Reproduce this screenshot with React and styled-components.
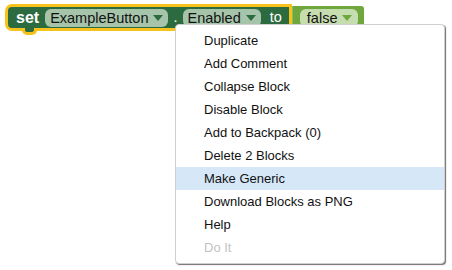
import styled, { createGlobalStyle } from "styled-components";

const GlobalStyle = createGlobalStyle`
  body {
    margin: 0;
    background: #fff;
    font-family: "Liberation Sans", Arial, sans-serif;
  }
`;

const Workspace = styled.div`
  position: relative;
  width: 452px;
  height: 270px;
  overflow: hidden;
  background: #fff;
`;

const BlockRow = styled.div`
  display: flex;
  align-items: center;
  padding: 4px 0 0 5px;
`;

const SetBlock = styled.div`
  position: relative;
  display: flex;
  align-items: center;
  height: 21px;
  padding: 0 7px 0 8px;
  background: #2c6a40;
  border: 3px solid #f8c21d;
  border-radius: 7px 0 0 7px;
  color: #fff;
  font-size: 14.5px;

  /* puzzle tab under the block */
  &::after {
    content: "";
    position: absolute;
    left: 14px;
    bottom: -7px;
    width: 9px;
    height: 4px;
    background: #2c6a40;
    border: 3px solid #f8c21d;
    border-top: none;
    border-radius: 0 0 5px 5px;
  }
`;

const Label = styled.span`
  color: #fff;
  font-weight: ${({ $bold }) => ($bold ? "bold" : "normal")};
  font-size: ${({ $size }) => $size || "14.5px"};
  margin: ${({ $m }) => $m || "0"};
  line-height: 1;
`;

const Field = styled.div`
  display: flex;
  align-items: center;
  height: 18px;
  padding: ${({ $pad }) => $pad || "0 5px"};
  border-radius: 6px;
  background: ${({ $bg }) => $bg};
  color: #111;
  font-size: 14.5px;
  margin: ${({ $m }) => $m || "0"};
`;

const Arrow = styled.span`
  display: inline-block;
  width: 0;
  height: 0;
  margin-left: 5px;
  border-left: 5px solid transparent;
  border-right: 5px solid transparent;
  border-top: 6px solid ${({ $c }) => $c};
`;

const ValueBlock = styled.div`
  display: flex;
  align-items: center;
  height: 25px;
  margin-left: -1px;
  margin-top: 1px;
  padding: 0 6px 0 9px;
  background: #6fa63e;
  border-radius: 0 3px 3px 0;
  box-shadow: inset 2px 0 0 #8cbc5e;
`;

const Menu = styled.ul`
  position: absolute;
  left: 175px;
  top: 24px;
  width: 268px;
  height: 234px;
  margin: 0;
  padding: 4px 0 0 0;
  list-style: none;
  background: #fff;
  border: 1px solid #cfcfcf;
  border-radius: 4px;
  box-shadow: 1px 1px 1px #6f6f6f;
`;

const Item = styled.li`
  height: 23px;
  line-height: 23px;
  padding-left: 28px;
  font-size: 13px;
  color: ${({ $disabled }) => ($disabled ? "#c2c2c2" : "#111")};
  background: ${({ $active }) => ($active ? "#d6e8f8" : "transparent")};
`;

const items = [
  "Duplicate",
  "Add Comment",
  "Collapse Block",
  "Disable Block",
  "Add to Backpack (0)",
  "Delete 2 Blocks",
  "Make Generic",
  "Download Blocks as PNG",
  "Help",
  "Do It",
];

export default function App() {
  return (
    <>
      <GlobalStyle />
      <Workspace>
        <BlockRow>
          <SetBlock>
            <Label $bold $size="16px">set</Label>
            <Field $bg="#a6c4aa" $m="0 0 0 6px">
              ExampleButton
              <Arrow $c="#2c6a40" />
            </Field>
            <Label $m="0 5px 0 5px">.</Label>
            <Field $bg="#a6c4aa">
              Enabled
              <Arrow $c="#2c6a40" />
            </Field>
            <Label $m="0 0 0 9px">to</Label>
          </SetBlock>
          <ValueBlock>
            <Field $bg="#c6ddb0" $pad="0 6px 0 7px">
              false
              <Arrow $c="#6fa63e" />
            </Field>
          </ValueBlock>
        </BlockRow>
        <Menu>
          {items.map((t) => (
            <Item key={t} $active={t === "Make Generic"} $disabled={t === "Do It"}>
              {t}
            </Item>
          ))}
        </Menu>
      </Workspace>
    </>
  );
}
